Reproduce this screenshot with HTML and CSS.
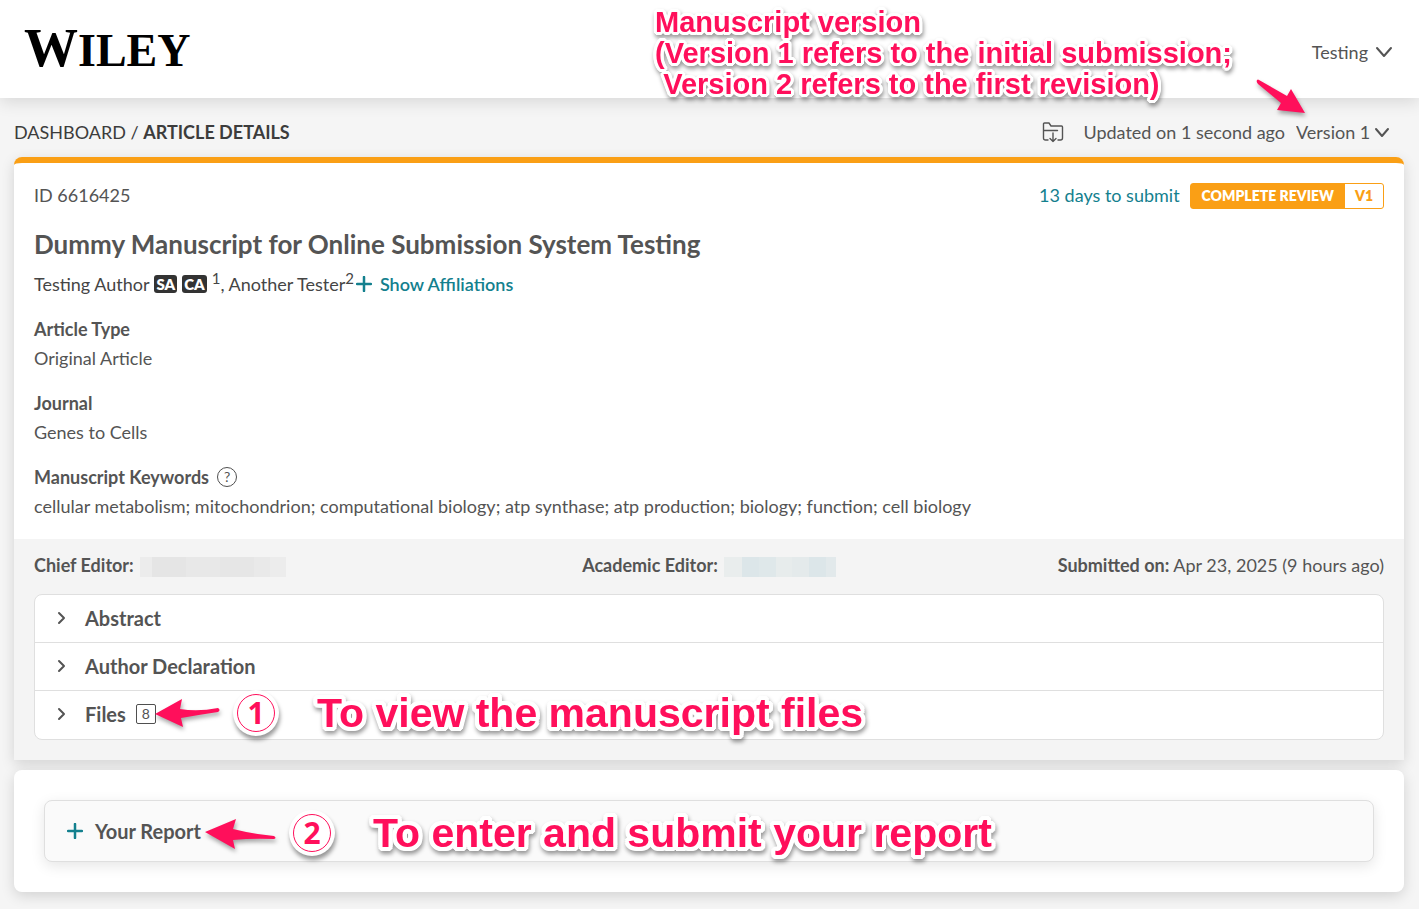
FILE: index.html
```html
<!DOCTYPE html>
<html lang="en">
<head>
    <meta charset="UTF-8">
    <meta name="viewport" content="width=device-width, initial-scale=1.0">
    <title>Article Details</title>
    <link rel="stylesheet" href="styles.css">
</head>
<body>
<header class="header">
    <a class="logo" href="#">W<span class="logo-small">ILEY</span></a>
    <button class="user-menu" type="button">
        Testing
        <svg width="18" height="18" viewBox="0 0 18 18"><path class="line" d="M2 5l7 8 7-8"/></svg>
    </button>
    <div class="note note-version">
        <p>Manuscript version<br>(Version 1 refers to the initial submission;<br>&nbsp;Version 2 refers to the first revision)</p>
    </div>
</header>

<main class="page">
    <div class="toolbar">
        <nav class="breadcrumb"><a href="#">DASHBOARD</a> / <strong>ARTICLE DETAILS</strong></nav>
        <div class="toolbar-right">
            <button class="icon-button" type="button" aria-label="Download files">
                <svg width="22" height="22" viewBox="0 0 22 22"><path class="thin" d="M6 19H3.500q-2 0-2-2V3q0-1 1-1H7l2 3h10.500q1 0 1 1v11q0 2-2 2H16M1.500 9.500h14M11 12v8.500M8 17.500l3 3 3-3"/></svg>
            </button>
            <span class="updated">Updated on 1 second ago</span>
            <label class="version">
                <select aria-label="Version">
                    <option>Version 1</option>
                </select>
                <svg width="16" height="16" viewBox="0 0 16 16"><path class="line" d="M2 5l6 7 6-7"/></svg>
            </label>
            <svg class="arrow arrow-version" width="56" height="42" viewBox="0 0 56 42"><path d="M4 4Q3 6 5 8L28 27 24 34 52 37 38 13 34 20 6 4Q5 3 4 4z"/></svg>
        </div>
    </div>

    <section class="card article">
        <div class="article-main">
            <div class="article-top">
                <span>ID 6616425</span>
                <div class="status">
                    <span class="deadline">13 days to submit</span>
                    <span class="badge"><span class="badge-name">COMPLETE REVIEW</span><span class="badge-version">V1</span></span>
                </div>
            </div>
            <h1>Dummy Manuscript for Online Submission System Testing</h1>
            <div class="authors">
                <span>Testing Author</span>
                <span class="tag">SA</span>
                <span class="tag">CA</span>
                <span><sup>1</sup>, Another Tester<sup>2</sup></span>
                <button class="affiliations" type="button">
                    <svg width="16" height="16" viewBox="0 0 16 16"><path class="plus" d="M8 1v14M1 8h14"/></svg>
                    Show Affiliations
                </button>
            </div>
            <dl class="details">
                <div>
                    <dt>Article Type</dt>
                    <dd>Original Article</dd>
                </div>
                <div>
                    <dt>Journal</dt>
                    <dd>Genes to Cells</dd>
                </div>
                <div>
                    <dt>Manuscript Keywords <span class="help">?</span></dt>
                    <dd>cellular metabolism; mitochondrion; computational biology; atp synthase; atp production; biology; function; cell biology</dd>
                </div>
            </dl>
        </div>

        <div class="article-info">
            <div class="editors">
                <div class="editor"><strong>Chief Editor:</strong><span class="masked masked-gray"></span></div>
                <div class="editor"><strong>Academic Editor:</strong><span class="masked masked-blue"></span></div>
                <div class="submitted"><strong>Submitted on:</strong> Apr 23, 2025 (9 hours ago)</div>
            </div>
            <div class="accordion">
                <button class="accordion-row" type="button">
                    <svg width="12" height="14" viewBox="0 0 12 14"><path class="line" d="M3 2l5 5-5 5"/></svg>
                    Abstract
                </button>
                <button class="accordion-row" type="button">
                    <svg width="12" height="14" viewBox="0 0 12 14"><path class="line" d="M3 2l5 5-5 5"/></svg>
                    Author Declaration
                </button>
                <div class="noted">
                    <button class="accordion-row" type="button">
                        <svg width="12" height="14" viewBox="0 0 12 14"><path class="line" d="M3 2l5 5-5 5"/></svg>
                        Files <span class="count">8</span>
                    </button>
                    <div class="note note-files">
                        <svg class="arrow" width="70" height="34" viewBox="0 0 70 34"><path d="M1 18L28 3 26 13Q44 16 64 12Q67 14 64 16Q44 19 27 22L29 31z"/></svg>
                        <span class="step">1</span>
                        <p>To view the manuscript files</p>
                    </div>
                </div>
            </div>
        </div>
    </section>

    <section class="card report">
        <div class="noted">
            <button class="report-toggle" type="button">
                <svg width="16" height="16" viewBox="0 0 16 16"><path class="plus" d="M8 1v14M1 8h14"/></svg>
                Your Report
            </button>
            <div class="note note-report">
                <svg class="arrow" width="76" height="36" viewBox="0 0 76 36"><path d="M1 17L32 4 29 14Q48 19 70 21Q73 23 70 24Q48 23 29 25L31 34z"/></svg>
                <span class="step">2</span>
                <p>To enter and submit your report</p>
            </div>
        </div>
    </section>
</main>
</body>
</html>
```

FILE: styles.css
```css
* {
    box-sizing: border-box;
}
body {
    margin: 0;
    background-color: #f5f5f5;
    color: #545454;
    font-family: Lato, "Open Sans", sans-serif;
    font-size: 18px;
    line-height: 24px;
}
h1, p, dl, dd {
    margin: 0;
}
a {
    color: inherit;
    text-decoration: none;
}
button, select {
    padding: 0;
    border: none;
    background: none;
    color: inherit;
    font: inherit;
    cursor: pointer;
}
svg {
    display: block;
    flex: none;
    fill: none;
    stroke: currentColor;
    stroke-linecap: round;
    stroke-linejoin: round;
}
.line {
    stroke-width: 2;
}
.thin {
    stroke-width: 1.4;
}
.plus {
    stroke-width: 2.5;
}
.header {
    position: relative;
    display: flex;
    align-items: center;
    justify-content: space-between;
    min-height: 98px;
    padding: 6px 26px 0 24px;
    background-color: #fff;
    box-shadow: 0 4px 16px rgba(0,0,0,0.12);
}
.logo {
    padding-bottom: 6px;
    color: #000;
    font-family: "Liberation Serif", serif;
    font-size: 54px;
    font-weight: bold;
    line-height: 56px;
}
.logo-small {
    font-size: 46px;
}
.user-menu {
    display: flex;
    align-items: center;
    gap: 7px;
}
.page {
    padding: 22px 15px 17px 14px;
}
.toolbar {
    display: flex;
    align-items: center;
    justify-content: space-between;
    margin-bottom: 13px;
}
.breadcrumb {
    color: #3c3c3c;
}
.toolbar-right {
    position: relative;
    display: flex;
    align-items: center;
    padding-right: 14px;
}
.updated {
    margin: 0 11px 0 19px;
}
.version {
    display: flex;
    align-items: center;
    gap: 3px;
}
.version select {
    appearance: none;
}
.card {
    background-color: #fff;
    border-radius: 8px;
    box-shadow: 0 4px 14px rgba(0,0,0,0.14);
}
.article {
    border-top: 6px solid #fa9f15;
    border-radius: 8px 8px 0 0;
}
.article-main {
    padding: 20px 20px 21px;
}
.article-top, .status {
    display: flex;
    align-items: flex-start;
    justify-content: space-between;
}
.status {
    gap: 10px;
}
.deadline, .affiliations, .report-toggle svg {
    color: #13808e;
}
.badge {
    display: flex;
    border: 1px solid #fa9f15;
    border-radius: 3px;
    color: #fa9f15;
    font-size: 14px;
    font-weight: 800;
    line-height: 24px;
}
.badge-name {
    padding: 0 11px;
    background-color: #fa9f15;
    color: #fff;
}
.badge-version {
    padding: 0 10px;
}
h1 {
    margin-top: 19px;
    font-size: 26px;
    font-weight: bold;
    line-height: 32px;
}
.authors {
    display: flex;
    align-items: center;
    gap: 5px;
    margin-top: 12px;
    color: #454545;
}
.tag {
    padding: 0 2px;
    border-radius: 3px;
    background-color: #333;
    color: #fff;
    font-size: 15px;
    font-weight: 800;
    line-height: 18px;
}
sup {
    font-size: 15px;
    line-height: 0;
}
.affiliations {
    display: flex;
    align-items: center;
    gap: 8px;
    margin-left: -3px;
    font-weight: 600;
}
.details {
    display: grid;
    gap: 21px;
    margin-top: 21px;
}
dt {
    display: flex;
    align-items: center;
    gap: 8px;
    margin-bottom: 5px;
    font-weight: bold;
}
.help {
    width: 20px;
    height: 20px;
    border: 1px solid #4f4f4f;
    border-radius: 50%;
    font-size: 14px;
    font-weight: normal;
    line-height: 18px;
    text-align: center;
}
.article-info {
    padding: 14px 20px 20px;
    background-color: #f4f4f4;
}
.editors {
    display: grid;
    grid-template-columns: 1fr auto 1fr;
    margin-bottom: 17px;
}
.editor {
    display: flex;
    align-items: flex-end;
    gap: 6px;
}
.submitted {
    text-align: right;
}
.masked {
    height: 20px;
}
.masked-gray {
    width: 146px;
    background: linear-gradient(90deg, #ececec 12px, #e5e5e5 12px 46px, #e8e8e8 46px 80px, #e6e6e6 80px 114px, #e9e9e9 114px 130px, #ececec 130px);
}
.masked-blue {
    width: 112px;
    background: linear-gradient(90deg, #e9eded 18px, #dce6e9 18px 35px, #dfe8ea 35px 52px, #e7ecec 52px 68px, #e4eaeb 68px 85px, #dce6e9 85px 102px, #e2e9eb 102px);
}
.accordion {
    border: 1px solid #dfdfdf;
    border-radius: 8px;
    background-color: #fff;
}
.accordion-row {
    display: flex;
    align-items: center;
    gap: 17px;
    width: 100%;
    min-height: 48px;
    padding: 0 21px 2px;
    border-bottom: 1px solid #dfdfdf;
    font-size: 20px;
    font-weight: bold;
}
.noted .accordion-row {
    border-bottom: none;
}
.count {
    width: 20px;
    height: 20px;
    margin-left: -7px;
    border: 1px solid #4f4f4f;
    border-radius: 2px;
    font-size: 14px;
    font-weight: normal;
    line-height: 18px;
    text-align: center;
}
.report {
    margin-top: 10px;
    padding: 30px;
}
.report-toggle {
    display: flex;
    align-items: center;
    gap: 12px;
    width: 100%;
    min-height: 62px;
    padding: 0 22px;
    border: 1px solid #dfdfdf;
    border-radius: 8px;
    background-color: #fafafa;
    box-shadow: 0 4px 14px rgba(0,0,0,0.1);
    font-size: 20px;
    font-weight: bold;
}

/* pink notes over the page */
.noted {
    position: relative;
}
.note {
    position: absolute;
    z-index: 1;
    display: flex;
    align-items: center;
    color: #ff0f5b;
    font-family: "Liberation Sans", Arial, sans-serif;
    font-size: 41px;
    font-weight: bold;
    line-height: 48px;
    white-space: nowrap;
    pointer-events: none;
}
/* round white outline, then the shadow below it */
.note p {
    text-shadow:
        4px 0 #fff, -4px 0 #fff, 0 4px #fff, 0 -4px #fff,
        3px 3px #fff, -3px 3px #fff, 3px -3px #fff, -3px -3px #fff,
        4px 2px #fff, -4px 2px #fff, 4px -2px #fff, -4px -2px #fff,
        2px 4px #fff, -2px 4px #fff, 2px -4px #fff, -2px -4px #fff,
        2px 0 #fff, -2px 0 #fff, 0 2px #fff, 0 -2px #fff;
    filter: drop-shadow(1px 3px 2px rgba(0,0,0,0.4));
}
.note-version {
    top: 7px;
    right: 187px;
    font-size: 29px;
    line-height: 31px;
}
.note-version p {
    text-shadow:
        3px 0 #fff, -3px 0 #fff, 0 3px #fff, 0 -3px #fff,
        2px 2px #fff, -2px 2px #fff, 2px -2px #fff, -2px -2px #fff,
        3px 1px #fff, -3px 1px #fff, 3px -1px #fff, -3px -1px #fff,
        1px 3px #fff, -1px 3px #fff, 1px -3px #fff, -1px -3px #fff;
}
.note-files {
    top: -2px;
    left: 119px;
}
.note-report {
    top: 9px;
    left: 160px;
}
.arrow {
    fill: #ff0f5b;
    stroke: none;
    filter: drop-shadow(1px 3px 2px rgba(0,0,0,0.35));
}
.arrow-version {
    position: absolute;
    right: 95px;
    bottom: 26px;
    z-index: 1;
}
.step {
    width: 38px;
    height: 38px;
    margin: 0 42px 0 13px;
    border: 1px solid #ff0f5b;
    border-radius: 50%;
    background-color: #fff;
    box-shadow: 0 0 0 4px #fff, 1px 4px 4px 4px rgba(0,0,0,0.4);
    font-family: "Noto Sans", sans-serif;
    font-size: 30px;
    line-height: 36px;
    text-align: center;
}
```
